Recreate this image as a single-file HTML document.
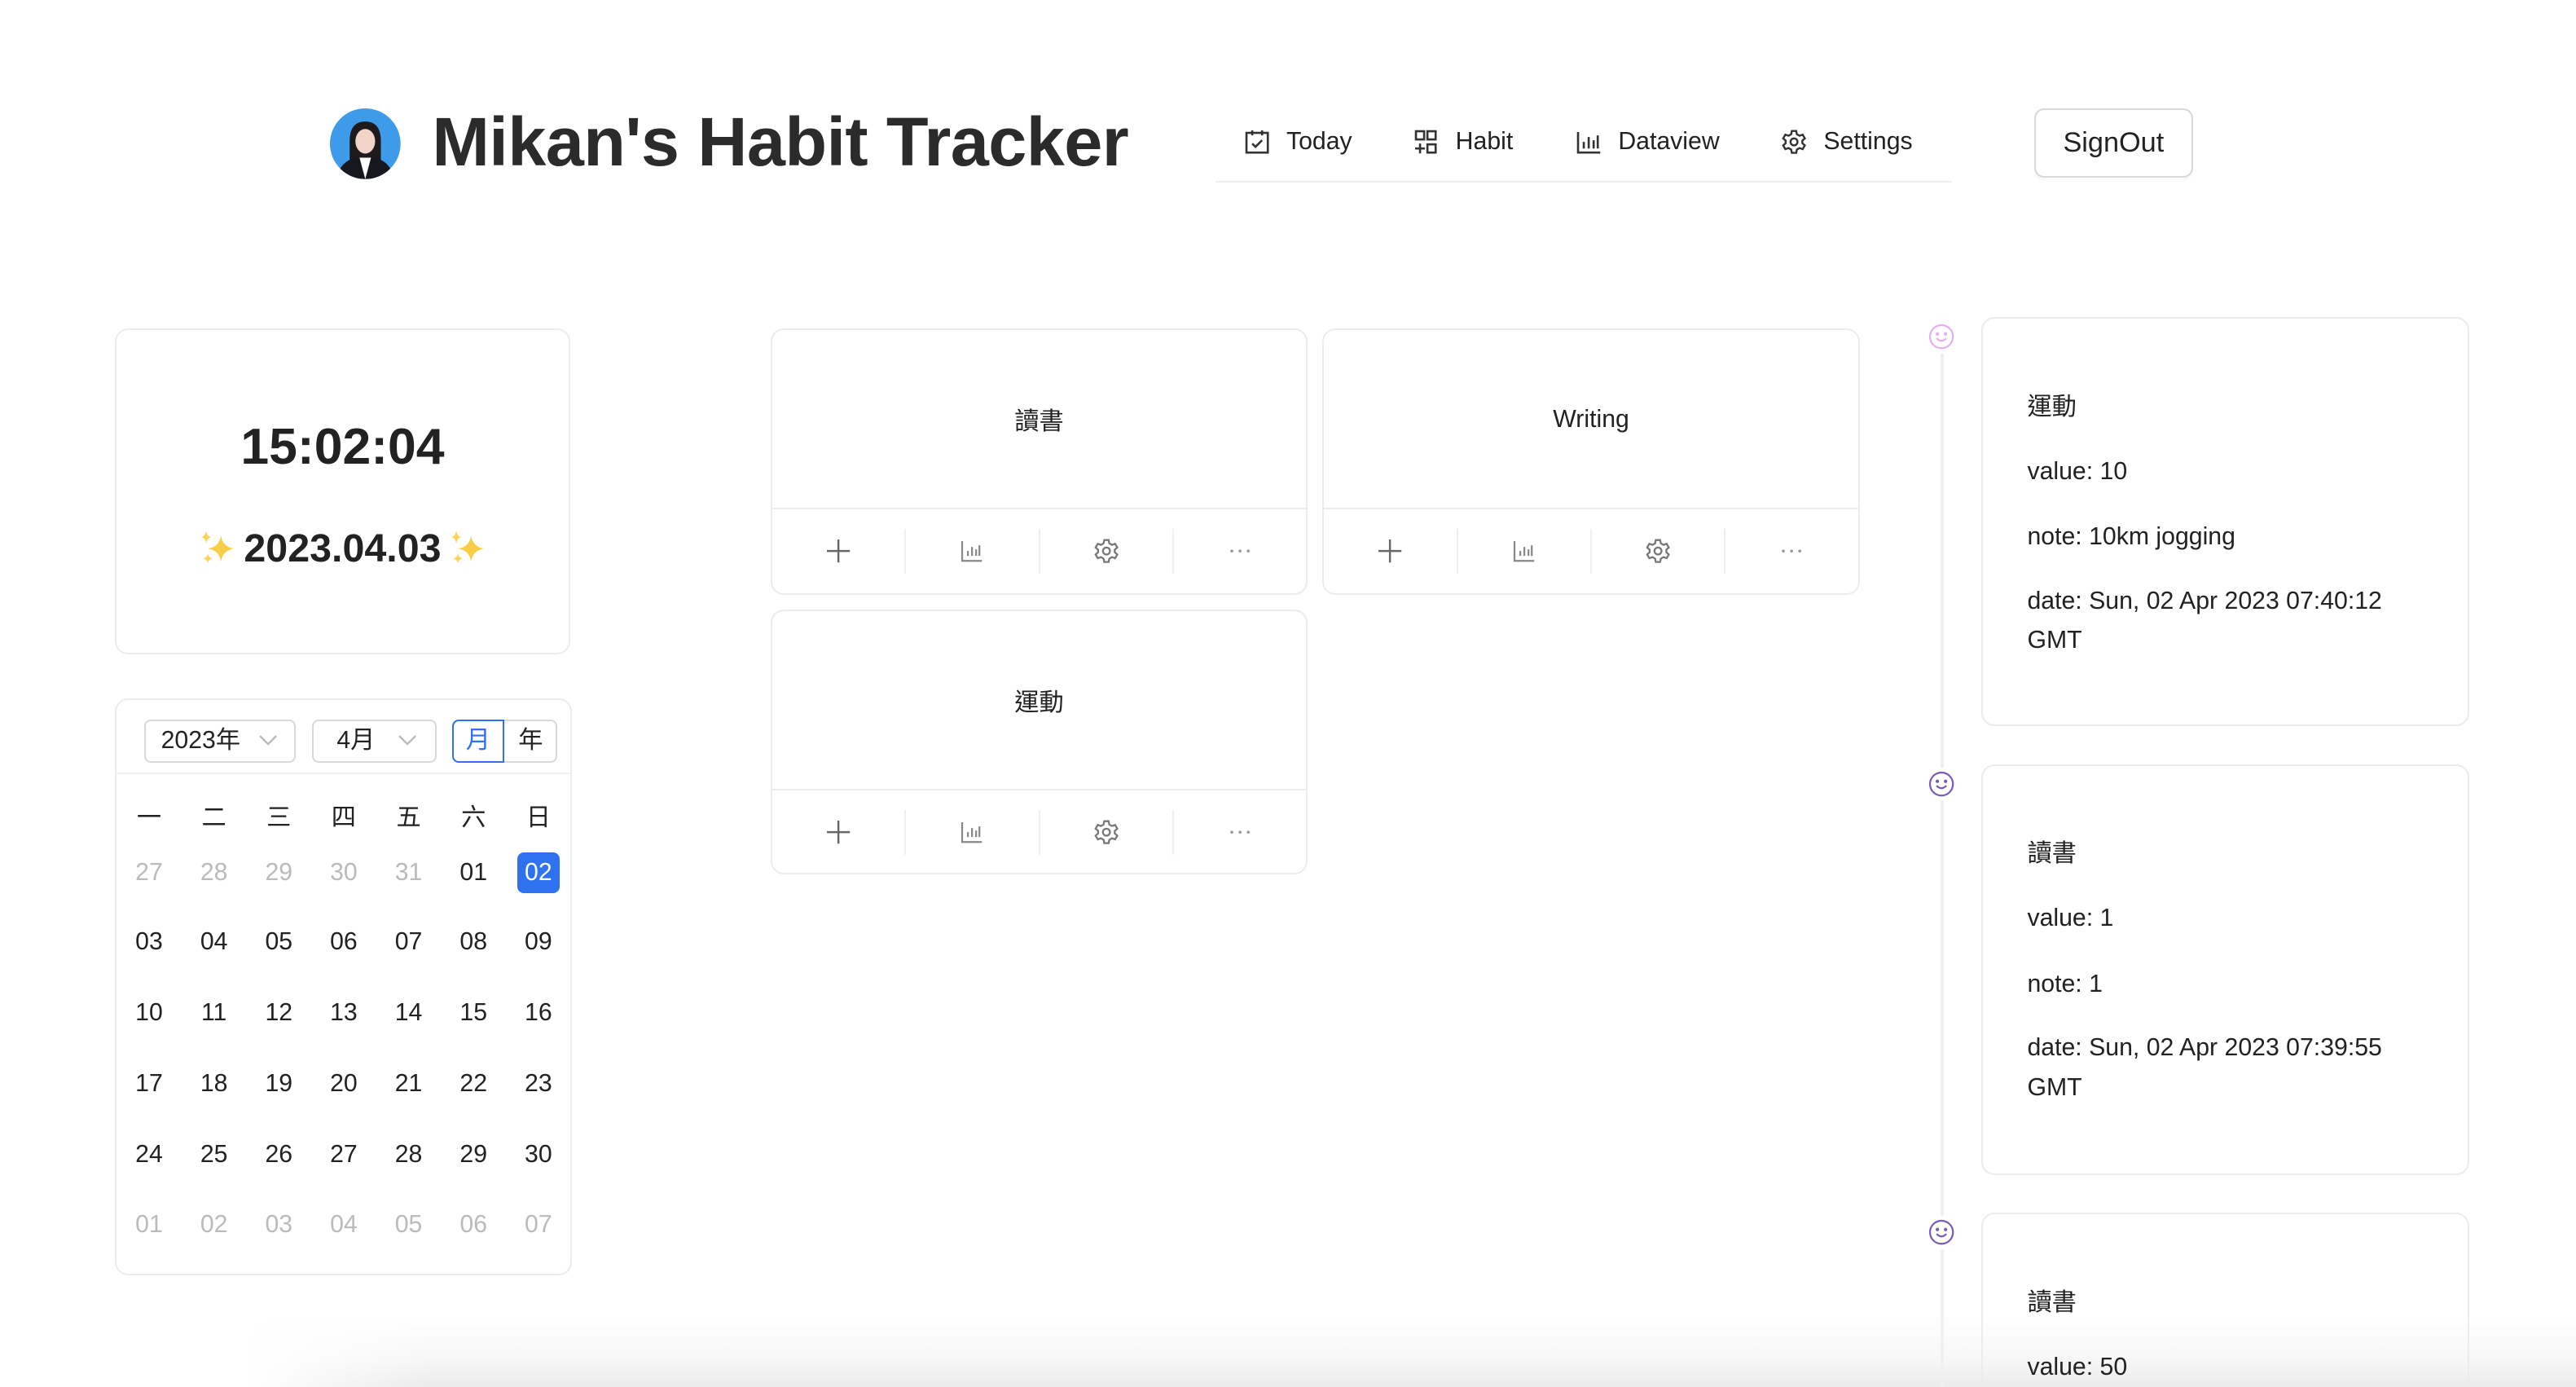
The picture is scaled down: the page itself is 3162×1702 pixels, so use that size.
<!DOCTYPE html>
<html><head><meta charset="utf-8">
<style>
html,body{margin:0;padding:0;background:#fff;overflow:hidden}
body{width:1568px;height:844px;zoom:2.0166;position:relative;font-family:"Liberation Sans","Noto Sans CJK TC",sans-serif;color:#222;overflow:hidden}
.a{position:absolute}
.card{position:absolute;border:1px solid #ececec;border-radius:8px;background:#fff;box-sizing:border-box}
.nav{position:absolute;top:78px;font-size:15px;color:#222;display:flex;align-items:center}
.nav svg{margin-right:10px}
.hc-title{position:absolute;left:0;right:0;top:44px;text-align:center;font-size:15px}
.hc-bar{position:absolute;left:0;right:0;top:108px;border-top:1px solid #ececec;height:51px;display:flex}
.hc-bar div{flex:1;display:flex;align-items:center;justify-content:center;border-left:1px solid #efefef;margin:12px 0}
.hc-bar div:first-child{border-left:none}
.cal td{width:39.5px;text-align:center;height:43px;font-size:15px;padding:0}
.cal tr.w td{height:28px}
.cal tr.f td{height:42px}
.cal{border-collapse:collapse;position:absolute;left:71px;top:482px}
.g{color:#bbb}
.tl p{margin:0;position:absolute;left:27px;font-size:15px;line-height:24px}
</style></head><body>

<div class="a" style="left:0;top:800px;width:1568px;height:44px;background:linear-gradient(to bottom,rgba(235,235,235,0) 0%,rgba(236,236,236,.4) 60%,rgba(232,232,232,.85) 100%);-webkit-mask-image:linear-gradient(to right,transparent 150px,#000 260px);mask-image:linear-gradient(to right,transparent 150px,#000 260px)"></div>

<svg class="a" style="left:201px;top:66px" width="43" height="43" viewBox="0 0 43 43">
<defs><clipPath id="c"><circle cx="21.5" cy="21.5" r="21.5"/></clipPath></defs>
<g clip-path="url(#c)"><rect width="43" height="43" fill="#3d9be9"/>
<path d="M12 43 L12 20 Q12 8 21.5 8 Q31 8 31 20 L31 43Z" fill="#1e1a1c"/>
<ellipse cx="21.5" cy="20" rx="6" ry="7.5" fill="#f1d3c8"/>
<path d="M4 43 Q6 32 16 30 L27 30 Q37 32 39 43Z" fill="#16181f"/>
<path d="M18 30 L21.5 43 L25 30Z" fill="#fff"/></g></svg>
<div class="a" style="left:263px;top:62px;font-size:42px;font-weight:bold;color:#2b2b2b;letter-spacing:-0.3px">Mikan's Habit Tracker</div>

<div class="nav" style="left:757px"><svg width="16" height="16" viewBox="0 0 16 16" fill="none" stroke="#333" stroke-width="1.3"><rect x="1.5" y="2.5" width="13" height="12"/><path d="M5 1v3M11 1v3M5 9l2 2 4-4"/></svg>Today</div>
<div class="nav" style="left:860px"><svg width="16" height="16" viewBox="0 0 16 16" fill="none" stroke="#333" stroke-width="1.3"><rect x="2" y="1.5" width="5" height="5"/><rect x="9" y="1.5" width="5" height="5"/><rect x="9" y="9.5" width="5" height="5"/><path d="M4.5 9v6M1.5 12h6"/></svg>Habit</div>
<div class="nav" style="left:959px"><svg width="16" height="16" viewBox="0 0 16 16" fill="none" stroke="#333" stroke-width="1.3"><path d="M1.5 2v12.5H15M5 12V8M8 12V5M11 12V7M13.5 12V4"/></svg>Dataview</div>
<div class="nav" style="left:1084px"><svg width="16" height="16" viewBox="0 0 24 24" fill="none" stroke="#333" stroke-width="1.8"><circle cx="12" cy="12" r="3.2"/><path d="M10 2h4l.6 3 2.4 1.4 2.9-1 2 3.4-2.3 2v2.4l2.3 2-2 3.4-2.9-1L14.6 19 14 22h-4l-.6-3L7 17.6l-2.9 1-2-3.4 2.3-2v-2.4l-2.3-2 2-3.4 2.9 1L9.4 5z"/></svg>Settings</div>
<div class="a" style="left:740px;top:110px;width:448px;height:1px;background:#eee"></div>

<div class="a" style="left:1238px;top:66px;width:97px;height:42px;border:1px solid #d9d9d9;border-radius:6px;box-sizing:border-box;font-size:17px;text-align:center;line-height:40px;box-shadow:0 2px 0 rgba(0,0,0,.02)">SignOut</div>

<div class="card" style="left:70px;top:200px;width:277px;height:198px">
<div class="a" style="left:0;right:0;top:53px;text-align:center;font-size:31px;font-weight:bold;color:#222">15:02:04</div>
<div class="a" style="left:0;right:0;top:119px;text-align:center;font-size:24px;font-weight:bold;color:#222;display:flex;justify-content:center;align-items:center">
<svg width="24" height="24" viewBox="0 0 24 24"><path d="M14 4 Q15 11 22 12 Q15 13 14 20 Q13 13 6 12 Q13 11 14 4Z" fill="#f9cd45"/><path d="M5 1 Q5.5 4.5 8 5 Q5.5 5.5 5 9 Q4.5 5.5 2 5 Q4.5 4.5 5 1Z" fill="#fbd35a"/><path d="M6 15 Q6.4 17.6 9 18 Q6.4 18.4 6 21 Q5.6 18.4 3 18 Q5.6 17.6 6 15Z" fill="#fbd35a"/></svg>
<span style="margin:0 4px">2023.04.03</span>
<svg width="24" height="24" viewBox="0 0 24 24"><path d="M14 4 Q15 11 22 12 Q15 13 14 20 Q13 13 6 12 Q13 11 14 4Z" fill="#f9cd45"/><path d="M5 1 Q5.5 4.5 8 5 Q5.5 5.5 5 9 Q4.5 5.5 2 5 Q4.5 4.5 5 1Z" fill="#fbd35a"/><path d="M6 15 Q6.4 17.6 9 18 Q6.4 18.4 6 21 Q5.6 18.4 3 18 Q5.6 17.6 6 15Z" fill="#fbd35a"/></svg></div>
</div>

<div class="card" style="left:70px;top:425px;width:278px;height:351px"></div>
<div class="a" style="left:88px;top:438px;width:92px;height:26px;border:1px solid #d9d9d9;border-radius:4px;box-sizing:border-box;font-size:15px;line-height:24px;padding-left:9px">2023年<svg class="a" style="left:68px;top:8px" width="12" height="8" viewBox="0 0 12 8" fill="none" stroke="#bbb" stroke-width="1.2"><path d="M1 1l5 5 5-5"/></svg></div>
<div class="a" style="left:190px;top:438px;width:76px;height:26px;border:1px solid #d9d9d9;border-radius:4px;box-sizing:border-box;font-size:15px;line-height:24px;padding-left:14px">4月<svg class="a" style="left:51px;top:8px" width="12" height="8" viewBox="0 0 12 8" fill="none" stroke="#bbb" stroke-width="1.2"><path d="M1 1l5 5 5-5"/></svg></div>
<div class="a" style="left:275px;top:438px;width:64px;height:26px;border:1px solid #d9d9d9;border-radius:4px;box-sizing:border-box"></div>
<div class="a" style="left:275px;top:438px;width:32px;height:26px;border:1px solid #2f72f0;border-radius:4px 0 0 4px;box-sizing:border-box;color:#2f72f0;font-size:15px;text-align:center;line-height:24px">月</div>
<div class="a" style="left:307px;top:438px;width:32px;height:26px;font-size:15px;text-align:center;line-height:26px">年</div>
<div class="a" style="left:71px;top:470px;width:276px;height:1px;background:#f0f0f0"></div>
<table class="cal">
<tr class="w"><td>一</td><td>二</td><td>三</td><td>四</td><td>五</td><td>六</td><td>日</td></tr>
<tr class="f"><td class="g">27</td><td class="g">28</td><td class="g">29</td><td class="g">30</td><td class="g">31</td><td>01</td><td><span style="display:inline-block;width:26px;height:25px;line-height:25px;background:#2f72f0;color:#fff;border-radius:4px">02</span></td></tr>
<tr><td>03</td><td>04</td><td>05</td><td>06</td><td>07</td><td>08</td><td>09</td></tr>
<tr><td>10</td><td>11</td><td>12</td><td>13</td><td>14</td><td>15</td><td>16</td></tr>
<tr><td>17</td><td>18</td><td>19</td><td>20</td><td>21</td><td>22</td><td>23</td></tr>
<tr><td>24</td><td>25</td><td>26</td><td>27</td><td>28</td><td>29</td><td>30</td></tr>
<tr><td class="g">01</td><td class="g">02</td><td class="g">03</td><td class="g">04</td><td class="g">05</td><td class="g">06</td><td class="g">07</td></tr>
</table>

<svg width="0" height="0" style="position:absolute"><defs>
<g id="plus"><path d="M8 1v14M1 8h14" stroke="#666" stroke-width="1.2" fill="none"/></g>
<g id="bar"><path d="M2 2v12h12M5.5 11V8M8 11V5.5M10.5 11V7M12.5 11V4.5" stroke="#888" stroke-width="1.1" fill="none"/></g>
<g id="gear"><g transform="scale(.667)" fill="none" stroke="#777" stroke-width="1.7"><circle cx="12" cy="12" r="3.2"/><path d="M10 2h4l.6 3 2.4 1.4 2.9-1 2 3.4-2.3 2v2.4l2.3 2-2 3.4-2.9-1L14.6 19 14 22h-4l-.6-3L7 17.6l-2.9 1-2-3.4 2.3-2v-2.4l-2.3-2 2-3.4 2.9 1L9.4 5z"/></g></g>
<g id="dots"><circle cx="3" cy="8" r=".9" fill="#999"/><circle cx="8" cy="8" r=".9" fill="#999"/><circle cx="13" cy="8" r=".9" fill="#999"/></g>
</defs></svg>

<div class="card" style="left:469px;top:200px;width:327px;height:162px"><div class="hc-title" style="top:43px">讀書</div><div class="hc-bar"><div><svg width="16" height="16"><use href="#plus"/></svg></div><div><svg width="16" height="16"><use href="#bar"/></svg></div><div><svg width="16" height="16"><use href="#gear"/></svg></div><div><svg width="16" height="16"><use href="#dots"/></svg></div></div></div>
<div class="card" style="left:805px;top:200px;width:327px;height:162px"><div class="hc-title" style="top:46px">Writing</div><div class="hc-bar"><div><svg width="16" height="16"><use href="#plus"/></svg></div><div><svg width="16" height="16"><use href="#bar"/></svg></div><div><svg width="16" height="16"><use href="#gear"/></svg></div><div><svg width="16" height="16"><use href="#dots"/></svg></div></div></div>
<div class="card" style="left:469px;top:371px;width:327px;height:161px"><div class="hc-title" style="top:43px">運動</div><div class="hc-bar"><div><svg width="16" height="16"><use href="#plus"/></svg></div><div><svg width="16" height="16"><use href="#bar"/></svg></div><div><svg width="16" height="16"><use href="#gear"/></svg></div><div><svg width="16" height="16"><use href="#dots"/></svg></div></div></div>

<div class="a" style="left:1181px;top:215px;width:2px;height:252px;background:#f0f0f0"></div>
<div class="a" style="left:1181px;top:487px;width:2px;height:253px;background:#f0f0f0"></div>
<div class="a" style="left:1181px;top:760px;width:2px;height:84px;background:#f0f0f0"></div>
<svg class="a" style="left:1174px;top:197px" width="16" height="16" viewBox="0 0 16 16" fill="none" stroke="#e4b0ee" stroke-width="1.1"><circle cx="8" cy="8" r="7"/><path d="M5 9 Q8 12 11 9"/><circle cx="5.5" cy="6.3" r=".5" fill="#e4b0ee"/><circle cx="10.5" cy="6.3" r=".5" fill="#e4b0ee"/></svg>
<svg class="a" style="left:1174px;top:469px" width="16" height="16" viewBox="0 0 16 16" fill="none" stroke="#7a5cb8" stroke-width="1.1"><circle cx="8" cy="8" r="7"/><path d="M5 9 Q8 12 11 9"/><circle cx="5.5" cy="6.3" r=".5" fill="#7a5cb8"/><circle cx="10.5" cy="6.3" r=".5" fill="#7a5cb8"/></svg>
<svg class="a" style="left:1174px;top:742px" width="16" height="16" viewBox="0 0 16 16" fill="none" stroke="#7a5cb8" stroke-width="1.1"><circle cx="8" cy="8" r="7"/><path d="M5 9 Q8 12 11 9"/><circle cx="5.5" cy="6.3" r=".5" fill="#7a5cb8"/><circle cx="10.5" cy="6.3" r=".5" fill="#7a5cb8"/></svg>

<div class="card tl" style="left:1206px;top:193px;width:297px;height:249px">
<p style="top:42px">運動</p><p style="top:81px">value: 10</p><p style="top:121px">note: 10km jogging</p><p style="top:160px">date: Sun, 02 Apr 2023 07:40:12<br>GMT</p></div>
<div class="card tl" style="left:1206px;top:465px;width:297px;height:250px">
<p style="top:42px">讀書</p><p style="top:81px">value: 1</p><p style="top:121px">note: 1</p><p style="top:160px">date: Sun, 02 Apr 2023 07:39:55<br>GMT</p></div>
<div class="card tl" style="left:1206px;top:738px;width:297px;height:106px;background:transparent;border-bottom:none;border-radius:8px 8px 0 0">
<p style="top:42px">讀書</p><p style="top:81px">value: 50</p></div>
</body></html>
